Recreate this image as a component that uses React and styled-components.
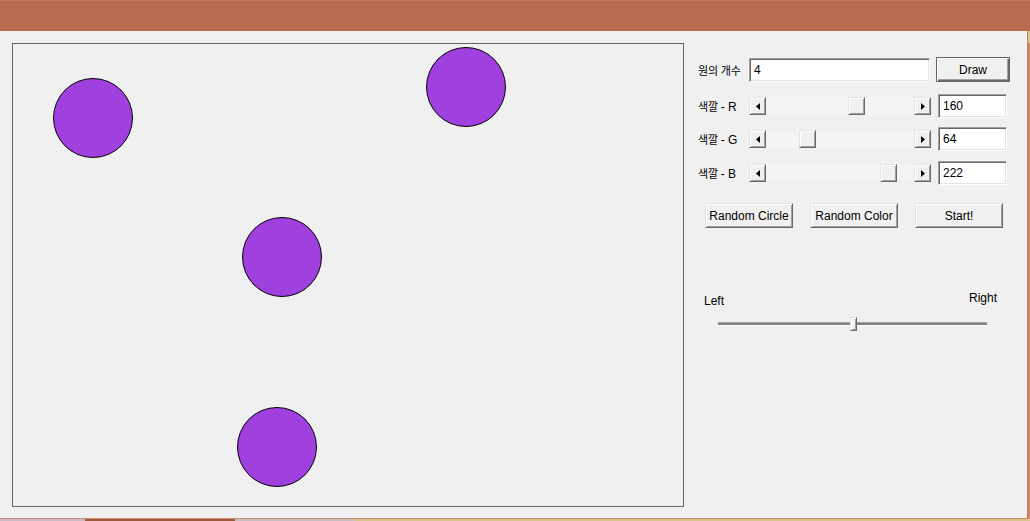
import React from "react";
import styled, { createGlobalStyle } from "styled-components";

const Global = createGlobalStyle`
  html, body { margin: 0; padding: 0; background: #f0f0f0; }
  * { box-sizing: border-box; }
`;

const Screen = styled.div`
  width: 1030px;
  height: 521px;
  overflow: hidden;
  display: flex;
  flex-direction: column;
  font-family: "Liberation Sans", Arial, sans-serif;
  font-size: 12px;
  color: #000;
`;

const TitleBar = styled.div`
  height: 31px;
  flex: none;
  background: #b86b4e;
  border-top: 1px solid #c17a60;
`;

const WindowRow = styled.div`
  display: flex;
  height: 488px;
  flex: none;
`;

const WindowBody = styled.div`
  width: 1028px;
  height: 488px;
  background: #f0f0f0;
  border-right: 1px solid #c07a5c;
  border-bottom: 1px solid #d08a6c;
  display: flex;
  align-items: flex-start;
  padding: 12px 0 0 12px;
`;

const DesktopEdge = styled.div`
  flex: 1;
  background: linear-gradient(#d9c891 0 12px, #c98a63 12px 100%);
`;

const Taskbar = styled.div`
  height: 2px;
  flex: none;
  display: flex;
`;

const TaskSeg = styled.div`
  width: ${(p) => p.$w}px;
  flex: ${(p) => (p.$w ? "none" : 1)};
  background: ${(p) => p.$c};
`;

const Canvas = styled.div`
  position: relative;
  width: 672px;
  height: 464px;
  border: 1px solid #646464;
  background: #f0f0f0;
  flex: none;
`;

const Circle = styled.div`
  position: absolute;
  width: 80px;
  height: 80px;
  border-radius: 50%;
  border: 1px solid #000;
  background: rgb(160, 64, 222);
`;

const Panel = styled.div`
  margin: 14px 0 0 14px;
  display: flex;
  flex-direction: column;
`;

const Row = styled.div`
  display: flex;
  align-items: center;
  height: ${(p) => p.$h || 24}px;
  margin-top: ${(p) => p.$mt || 0}px;
`;

const Label = styled.div`
  width: 51px;
  flex: none;
  font-family: "Noto Sans CJK KR", "Liberation Sans", sans-serif;
  font-size: 11px;
  line-height: 14px;
  white-space: nowrap;
`;

const LatinPart = styled.span`
  font-family: "Liberation Sans", Arial, sans-serif;
  font-size: 12px;
`;

const Sunken = styled.div`
  height: 24px;
  width: ${(p) => p.$w}px;
  margin-right: ${(p) => p.$mr || 0}px;
  background: #fff;
  border: 1px solid;
  border-color: #a0a0a0 #ffffff #ffffff #a0a0a0;
  box-shadow: inset 1px 1px 0 #696969, inset -1px -1px 0 #e3e3e3;
  padding: 0 4px;
  display: flex;
  align-items: center;
  font-size: 12px;
  flex: none;
`;

const Button = styled.div`
  width: ${(p) => p.$w || 88}px;
  height: 25px;
  flex: none;
  background: #f0f0f0;
  border: 1px solid;
  border-color: ${(p) =>
    p.$default ? "#646464" : "#e3e3e3 #696969 #696969 #e3e3e3"};
  box-shadow: ${(p) =>
    p.$default
      ? "inset 1px 1px 0 #fff, inset -1px -1px 0 #696969, inset -2px -2px 0 #a0a0a0"
      : "inset 1px 1px 0 #fff, inset -1px -1px 0 #a0a0a0"};
  display: flex;
  align-items: center;
  justify-content: center;
  font-size: 12px;
`;

const ButtonRow = styled.div`
  display: flex;
  gap: 17px;
  padding-left: 7px;
  margin-top: 18px;
`;

const ScrollBar = styled.div`
  width: 182px;
  height: 18px;
  margin-right: 7px;
  display: flex;
  flex: none;
`;

const RaisedBox = styled.div`
  width: 17px;
  height: 18px;
  flex: none;
  background: #f0f0f0;
  border: 1px solid;
  border-color: #e3e3e3 #696969 #696969 #e3e3e3;
  box-shadow: inset 1px 1px 0 #fff, inset -1px -1px 0 #a0a0a0;
  display: flex;
  align-items: center;
  justify-content: center;
`;

const Track = styled.div`
  position: relative;
  flex: 1;
  height: 18px;
  background: repeating-conic-gradient(#fbfbfb 0 25%, #ececec 0 50%) 0 0 / 2px 2px;
`;

const Thumb = styled(RaisedBox)`
  position: absolute;
  top: 0;
`;

const SideLabels = styled.div`
  display: flex;
  justify-content: space-between;
  align-items: flex-start;
  width: 293px;
  margin: 63px 0 0 6px;
  height: 14px;
  line-height: 14px;
`;

const LeftText = styled.span`
  margin-top: 3px;
`;

const Slider = styled.div`
  position: relative;
  width: 269px;
  height: 14px;
  margin: 12px 0 0 20px;
`;

const SliderTrack = styled.div`
  position: absolute;
  left: 0;
  right: 0;
  top: 5px;
  height: 4px;
  border-top: 1px solid #a0a0a0;
  border-bottom: 1px solid #ffffff;
  background: #808080;
`;

const SliderThumb = styled.div`
  position: absolute;
  top: 0;
  width: 7px;
  height: 14px;
  background: #f0f0f0;
  border: 1px solid;
  border-color: #e3e3e3 #696969 #696969 #e3e3e3;
  box-shadow: inset 1px 1px 0 #fff, inset -1px -1px 0 #a0a0a0;
`;

const Arrow = ({ dir }) => (
  <svg width="4" height="7" viewBox="0 0 4 7">
    {dir === "left" ? (
      <polygon points="4,0 4,7 0,3.5" fill="#000" />
    ) : (
      <polygon points="0,0 0,7 4,3.5" fill="#000" />
    )}
  </svg>
);

const ColorRow = ({ channel, value, mt }) => {
  const left = Math.round((value / 255) * 131);
  return (
    <Row $mt={mt}>
      <Label>
        색깔 <LatinPart>- {channel}</LatinPart>
      </Label>
      <ScrollBar>
        <RaisedBox>
          <Arrow dir="left" />
        </RaisedBox>
        <Track>
          <Thumb style={{ left }} />
        </Track>
        <RaisedBox>
          <Arrow dir="right" />
        </RaisedBox>
      </ScrollBar>
      <Sunken $w={69}>{value}</Sunken>
    </Row>
  );
};

const circles = [
  { x: 40, y: 34 },
  { x: 413, y: 3 },
  { x: 229, y: 173 },
  { x: 224, y: 363 },
];

export default function App() {
  return (
    <>
      <Global />
      <Screen>
        <TitleBar />
        <WindowRow>
          <WindowBody>
            <Canvas>
              {circles.map((c, i) => (
                <Circle key={i} style={{ left: c.x, top: c.y }} />
              ))}
            </Canvas>
            <Panel>
              <Row $h={25}>
                <Label>원의 개수</Label>
                <Sunken $w={181} $mr={6}>4</Sunken>
                <Button $w={74} $default>
                  Draw
                </Button>
              </Row>
              <ColorRow channel="R" value={160} mt={12} />
              <ColorRow channel="G" value={64} mt={9} />
              <ColorRow channel="B" value={222} mt={10} />
              <ButtonRow>
                <Button>Random Circle</Button>
                <Button>Random Color</Button>
                <Button>Start!</Button>
              </ButtonRow>
              <SideLabels>
                <LeftText>Left</LeftText>
                <span>Right</span>
              </SideLabels>
              <Slider>
                <SliderTrack />
                <SliderThumb style={{ left: 132 }} />
              </Slider>
            </Panel>
          </WindowBody>
          <DesktopEdge />
        </WindowRow>
        <Taskbar>
          <TaskSeg $w={85} $c="#c9bcc4" />
          <TaskSeg $w={150} $c="#9c5a3c" />
          <TaskSeg $w={120} $c="#c8bfc2" />
          <TaskSeg $c="#d8c38c" />
        </Taskbar>
      </Screen>
    </>
  );
}
